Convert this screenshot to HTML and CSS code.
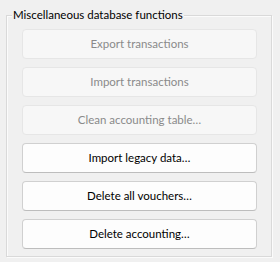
FILE: index.html
```html
<!DOCTYPE html>
<html>
<head>
<meta charset="utf-8">
<link rel="stylesheet" href="styles.css">
</head>
<body>
<div class="group">
  <span class="group-title">Miscellaneous database functions</span>
  <div class="buttons">
    <button class="btn" disabled>Export transactions</button>
    <button class="btn" disabled>Import transactions</button>
    <button class="btn" disabled>Clean accounting table…</button>
    <button class="btn">Import legacy data…</button>
    <button class="btn">Delete all vouchers…</button>
    <button class="btn">Delete accounting…</button>
  </div>
</div>
</body>
</html>
```
FILE: styles.css
```css
html, body {
  margin: 0;
  padding: 0;
  background: #f0f0f0;
  width: 280px;
  height: 262px;
  overflow: hidden;
  font-family: Lato, Roboto, sans-serif;
  font-size: 11px;
}
body {
  padding: 15px 0 0 6px;
  box-sizing: border-box;
}
.group {
  position: relative;
  width: 266px;
  box-sizing: border-box;
  border: 1px solid #d9d9d9;
  box-shadow: inset 1px 1px 0 #fbfbfb, 1px 1px 0 #fbfbfb;
  padding: 13px 14px 7px 15px;
}
.group-title {
  position: absolute;
  top: -9px;
  left: 5px;
  padding: 0 1px;
  background: #f0f0f0;
  color: #000;
  font-size: 11.5px;
  line-height: 16px;
  white-space: nowrap;
}
.buttons {
  display: flex;
  flex-direction: column;
  gap: 8px;
}
.btn {
  height: 30px;
  margin: 0;
  padding: 0;
  font: inherit;
  font-size: 11.5px;
  color: #000;
  background: #fdfdfd;
  border: 1px solid #d0d0d0;
  border-bottom-color: #bdbdbd;
  border-radius: 4px;
  line-height: 16px;
}
.btn:disabled {
  color: #8a8a8a;
  background: #f7f7f7;
  border-color: #e6e6e6;
}
```
